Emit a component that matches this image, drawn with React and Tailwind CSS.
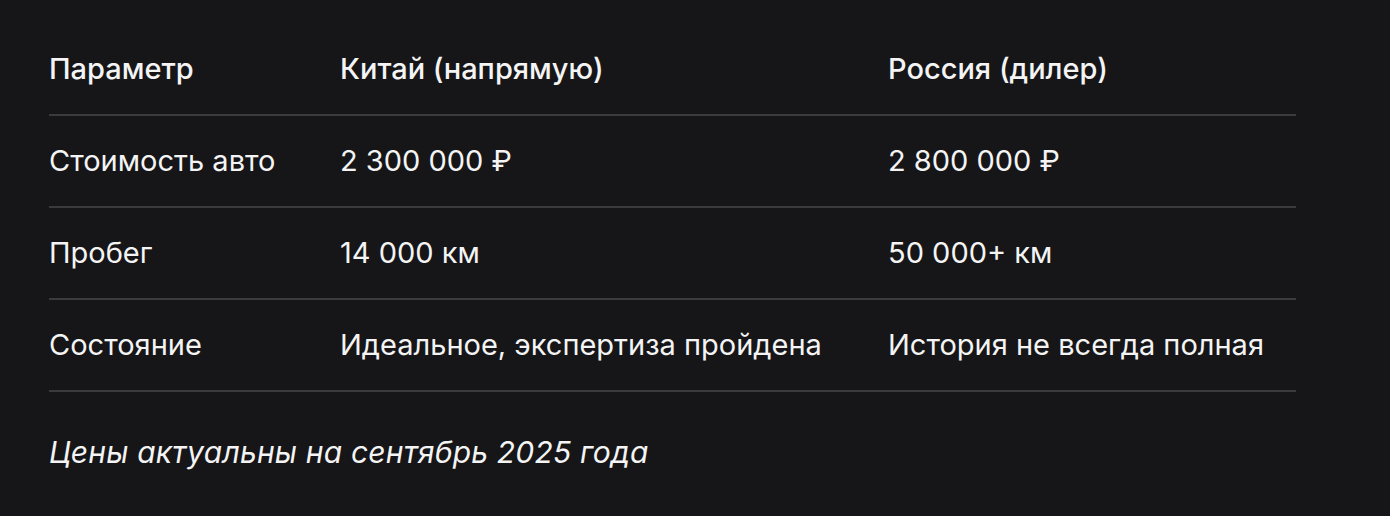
const rows = [
  ['Стоимость авто', '2 300 000 ₽', '2 800 000 ₽'],
  ['Пробег', '14 000 км', '50 000+ км'],
  ['Состояние', 'Идеальное, экспертиза пройдена', 'История не всегда полная'],
];

export default function App() {
  return (
    <div className="min-h-[516px] bg-[#161618] text-[#f4f4f4] px-[49px] pt-[24px] font-['Inter',sans-serif]">
      <table className="w-[1247px] border-collapse text-left text-[29px]">
        <thead>
          <tr className="border-b-2 border-[#3a3a3c] h-[91px]">
            <th className="w-[291px] font-medium">Параметр</th>
            <th className="w-[548px] font-medium">Китай (напрямую)</th>
            <th className="font-medium">Россия (дилер)</th>
          </tr>
        </thead>
        <tbody>
          {rows.map((r) => (
            <tr key={r[0]} className="border-b-2 border-[#3a3a3c] h-[92px]">
              <td>{r[0]}</td>
              <td>{r[1]}</td>
              <td>{r[2]}</td>
            </tr>
          ))}
        </tbody>
      </table>
      <p className="mt-[38px] text-[30px] italic tracking-[0.2px]">
        Цены актуальны на сентябрь 2025 года
      </p>
    </div>
  );
}
